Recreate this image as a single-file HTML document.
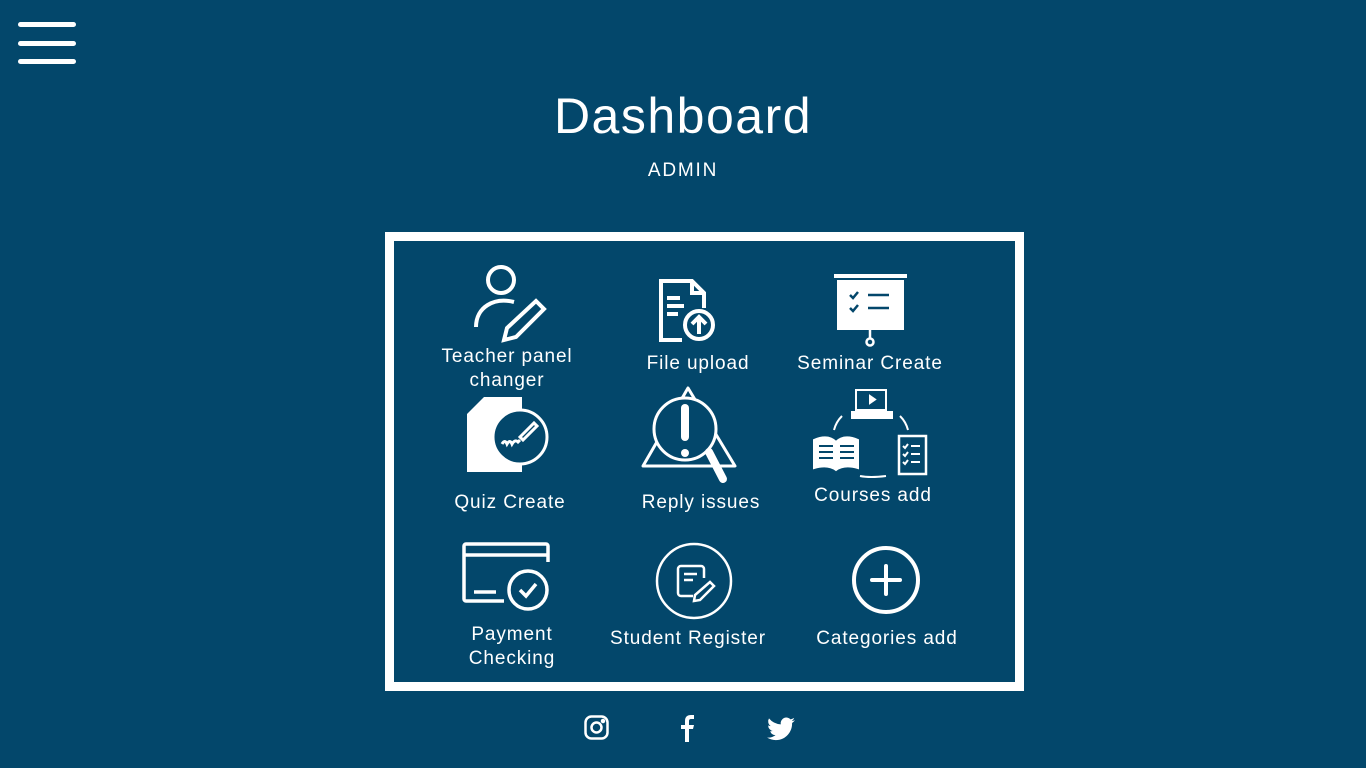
<!DOCTYPE html>
<html><head><meta charset="utf-8"><style>
body{margin:0;width:1366px;height:768px;background:#03476b;overflow:hidden;font-family:"Liberation Sans",sans-serif;color:#fff;position:relative}
.a{position:absolute}
.t{position:absolute;font-size:19px;letter-spacing:0.9px;text-align:center;line-height:24px;white-space:nowrap;transform:translateX(-50%)}
svg{position:absolute;overflow:visible}
</style></head><body>
<div class="a" style="left:18px;top:22px;width:58px;height:5px;background:#fff;border-radius:3px"></div>
<div class="a" style="left:18px;top:41px;width:58px;height:5px;background:#fff;border-radius:3px"></div>
<div class="a" style="left:18px;top:59px;width:58px;height:5px;background:#fff;border-radius:3px"></div>
<div class="a" style="left:0;width:1366px;top:88px;text-align:center;font-size:50px;letter-spacing:1.5px;line-height:56px">Dashboard</div>
<div class="a" style="left:0;width:1366px;top:160px;text-align:center;font-size:19px;letter-spacing:1.8px;line-height:22px">ADMIN</div>
<div class="a" style="left:385px;top:232px;width:621px;height:441px;border:9px solid #fff"></div>

<svg style="left:470px;top:263px" width="80" height="80" fill="none" stroke="#fff" stroke-width="4">
<circle cx="31" cy="17" r="13"/><path d="M6 64 C6 44 24 34 44 39"/>
<path d="M66 38 L74 46 L46 74 L34 77 L37 65 Z"/></svg>
<div class="t" style="left:507px;top:345px">Teacher panel<br>changer</div>

<svg style="left:658px;top:278px" width="62" height="66" fill="none" stroke="#fff" stroke-width="4">
<path d="M24 62 H3 V3 H34 L46 15 V30"/><path d="M34 3 V15 H46"/>
<path d="M9 20 H22 M9 28 H26 M9 36 H20"/>
<circle cx="41" cy="47" r="14"/><path d="M41 56 V40 M34 46 L41 39 L48 46"/></svg>
<div class="t" style="left:698px;top:352px">File upload</div>

<svg style="left:833px;top:274px" width="76" height="74">
<rect x="1" y="0" width="73" height="4" fill="#fff"/><rect x="4" y="6" width="67" height="50" fill="#fff"/>
<path d="M17 21 l3 3 5-6 M17 34 l3 3 5-6 M35 21 H56 M35 34 H56" stroke="#03476b" stroke-width="2.5" fill="none"/>
<path d="M37 56 V64" stroke="#fff" stroke-width="2.5"/><circle cx="37" cy="68" r="3.5" fill="none" stroke="#fff" stroke-width="2.5"/></svg>
<div class="t" style="left:870px;top:352px">Seminar Create</div>

<svg style="left:466px;top:397px" width="90" height="76">
<path d="M18 0 H56 V75 H1 V17 Z" fill="#fff"/><path d="M4 16 L17 3 V16 Z" fill="#fff"/>
<circle cx="54" cy="40" r="27" fill="#03476b" stroke="#fff" stroke-width="3"/>
<path d="M36 47 q3-5 5 0 q3-5 5 0 q3-5 6 -2 l2 -2 M54 40 L68 26 l3 3 L57 43 Z" stroke="#fff" stroke-width="3" fill="none"/></svg>
<div class="t" style="left:510px;top:491px">Quiz Create</div>

<svg style="left:641px;top:386px" width="98" height="100" fill="none" stroke="#fff" stroke-width="3">
<path d="M47 2 L94 80 H2 Z" stroke-linejoin="round"/>
<circle cx="44" cy="43" r="31" fill="#03476b"/>
<path d="M68 66 L82 93" stroke-width="8" stroke-linecap="round"/>
<rect x="40" y="18" width="8" height="37" rx="4" fill="#fff" stroke="none"/><circle cx="44" cy="67" r="4" fill="#fff" stroke="none"/></svg>
<div class="t" style="left:701px;top:491px">Reply issues</div>

<svg style="left:812px;top:388px" width="120" height="92" fill="none" stroke="#fff" stroke-width="2">
<rect x="44" y="2" width="30" height="20"/><path d="M58 8 v7 l5 -3.5 z" fill="#fff"/><path d="M40 24 H80 V30 H40 Z" fill="#fff"/>
<path d="M30 28 q-6 6 -8 14 M88 28 q6 6 8 14 M48 88 q10 2 26 0"/>
<path d="M2 52 q14 -6 22 2 q8 -8 22 -2 V80 q-14 -4 -22 2 q-8 -6 -22 -2 Z" fill="#fff"/>
<path d="M7 58 h14 M7 64 h14 M7 70 h14 M28 58 h14 M28 64 h14 M28 70 h14" stroke="#03476b"/>
<rect x="87" y="48" width="27" height="38" stroke-width="2.5"/>
<path d="M91 58 l2 2 3-4 M91 66 l2 2 3-4 M91 74 l2 2 3-4 M99 58 h9 M99 66 h9 M99 74 h9"/></svg>
<div class="t" style="left:873px;top:484px">Courses add</div>

<svg style="left:462px;top:542px" width="92" height="72" fill="none" stroke="#fff" stroke-width="3.5">
<path d="M42 59 H4 a2 2 0 0 1 -2 -2 V4 a2 2 0 0 1 2 -2 H84 a2 2 0 0 1 2 2 V20 M2 13 H86 M12 50 H34"/>
<circle cx="66" cy="48" r="19"/><path d="M58 48 l6 6 10 -12"/></svg>
<div class="t" style="left:512px;top:623px">Payment<br>Checking</div>

<svg style="left:655px;top:542px" width="80" height="80" fill="none" stroke="#fff" stroke-width="2.5">
<circle cx="39" cy="39" r="37"/>
<path d="M38 54 H26 a3 3 0 0 1 -3 -3 V27 a3 3 0 0 1 3 -3 H46 a3 3 0 0 1 3 3 V36 M29 32 H42 M29 38 H38"/>
<path d="M55 40 L59 44 L45 58 L39 59 L40 53 Z"/></svg>
<div class="t" style="left:688px;top:627px">Student Register</div>

<svg style="left:851px;top:546px" width="72" height="72" fill="none" stroke="#fff" stroke-width="4">
<circle cx="35" cy="34" r="32"/><path d="M35 20 V48 M21 34 H49" stroke-linecap="round"/></svg>
<div class="t" style="left:887px;top:627px">Categories add</div>

<svg style="left:584px;top:715px" width="26" height="26" fill="none" stroke="#fff" stroke-width="2.5">
<rect x="1.5" y="1.5" width="22" height="22" rx="6"/><circle cx="12.5" cy="12.5" r="5"/><circle cx="19" cy="6" r="1" fill="#fff"/></svg>
<svg style="left:681px;top:715px" width="14" height="27"><path d="M4 27 V14 H0 V10 H4 V6 Q4 0 10 0 H13 V4 H10 Q8 4 8 6 V10 H13 L12 14 H8 V27 Z" fill="#fff"/></svg>
<svg style="left:767px;top:717px" width="28" height="24" viewBox="0 0 24 20"><path d="M24 2.4a9.8 9.8 0 0 1-2.8.8 4.9 4.9 0 0 0 2.1-2.7 9.8 9.8 0 0 1-3.1 1.2A4.9 4.9 0 0 0 11.8 6 14 14 0 0 1 1.700.9a4.9 4.9 0 0 0 1.5 6.6A4.9 4.9 0 0 1 1 6.9a4.9 4.9 0 0 0 3.9 4.8 4.9 4.9 0 0 1-2.2.1 4.9 4.9 0 0 0 4.6 3.4A9.9 9.9 0 0 1 0 17.3 14 14 0 0 0 7.5 19.5c9.1 0 14-7.5 14-14v-.6A10 10 0 0 0 24 2.4z" fill="#fff"/></svg>
</body></html>
